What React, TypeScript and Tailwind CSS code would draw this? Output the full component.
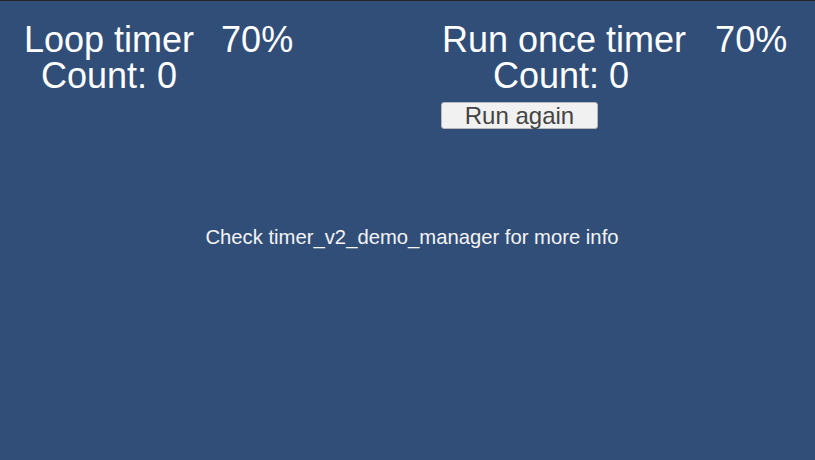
import React from "react";

export default function App() {
  return (
    <div
      className="w-[815px] h-[460px] bg-[#314e79] border-t border-[#222222] text-white relative overflow-hidden"
      style={{ fontFamily: '"Liberation Sans", Arial, sans-serif' }}
    >
      <div className="flex pt-[21px]">
        <div className="w-[441px] pl-[24px]">
          <div className="flex text-[36px] leading-[36px] whitespace-pre">
            <span>Loop timer</span>
            <span className="ml-[27px]">70%</span>
          </div>
          <div className="text-[36px] leading-[36px] pl-[17px]">Count: 0</div>
        </div>
        <div className="flex-1">
          <div className="flex text-[36px] leading-[36px] whitespace-pre pl-[1px]">
            <span>Run once timer</span>
            <span className="ml-[29px]">70%</span>
          </div>
          <div className="text-[36px] leading-[36px] pl-[52px]">Count: 0</div>
          <button className="mt-[8px] w-[157px] h-[27px] bg-[#f1f1f1] border border-[#b8b8b8] rounded-[3px] text-[#444444] text-[24px] leading-[25px] flex items-center justify-center">
            Run again
          </button>
        </div>
      </div>
      <div className="mt-[96px] pl-[9px] text-center text-[20.25px] leading-[24px] text-[#f4f4f4]">
        Check timer_v2_demo_manager for more info
      </div>
    </div>
  );
}
